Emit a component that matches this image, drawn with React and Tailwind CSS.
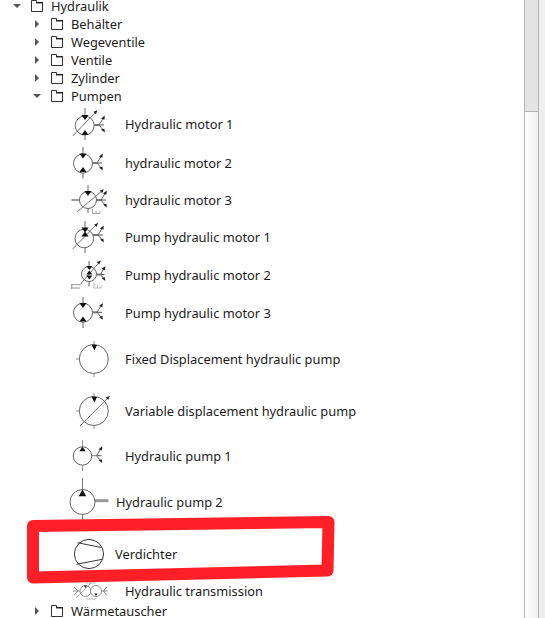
const INK = "#555";

function Tri({ x, y, dir, s = 3.6, h = 5 }) {
  const pts = dir === "down"
    ? `${x},${y + h} ${x - s},${y} ${x + s},${y}`
    : `${x},${y} ${x - s},${y + h} ${x + s},${y + h}`;
  return <polygon points={pts} fill="#111" />;
}

function Line({ a, w = 0.9, c = INK }) {
  return <line x1={a[0]} y1={a[1]} x2={a[2]} y2={a[3]} stroke={c} strokeWidth={w} />;
}

function Fan({ x, y, len = 5, spread = 6, thick = true, left = false }) {
  const d = left ? -1 : 1;
  const ex = x + d * (len + spread - 1);
  return (
    <g>
      <Line a={[x, y, x + d * len, y]} w={thick ? 2 : 0.9} c="#777" />
      <Line a={[x + d * len, y, ex, y]} w={1} />
      <Line a={[x + d * len, y, ex, y - spread - 2]} w={0.9} />
      <Line a={[x + d * len, y, ex, y + spread]} w={0.9} />
      <polygon points={`${ex + d * 0.8},${y - spread - 3.4} ${ex - d * 3},${y - spread - 0.4} ${ex + d * 0.4},${y - spread + 0.8}`} fill="#222" />
      <polygon points={`${ex + d * 0.8},${y + spread + 1.4} ${ex - d * 3},${y + spread - 1.4} ${ex + d * 0.4},${y + spread - 2.2}`} fill="#222" />
    </g>
  );
}

function Circle({ cx, cy, r, c = "#666", w = 1 }) {
  return <circle cx={cx} cy={cy} r={r} fill="#fff" stroke={c} strokeWidth={w} />;
}

function Diag({ a }) {
  const [x1, y1, x2, y2] = a;
  return (
    <g>
      <Line a={a} w={0.9} c="#666" />
      <polygon points={`${x2 + 0.8},${y2 - 0.8} ${x2 - 3.2},${y2 + 0.8} ${x2 - 0.8},${y2 + 3.2}`} fill="#222" />
    </g>
  );
}

const icons = {
  motor1: (
    <g>
      <Line a={[85, 108, 85, 116]} />
      <Line a={[85, 135, 85, 140]} />
      <Fan x={94} y={125} />
      <Circle cx={84.7} cy={125.5} r={9.5} />
      <Diag a={[72.7, 136, 96.7, 111]} />
      <Tri x={85} y={115} dir="down" />
      <Tri x={85} y={130} dir="up" />
    </g>
  ),
  motor2: (
    <g>
      <Line a={[83, 147, 83, 154]} />
      <Line a={[83, 173, 83, 178.5]} />
      <Fan x={92} y={163} />
      <Circle cx={83} cy={163.5} r={9.5} />
      <Tri x={83} y={153.5} dir="down" />
      <Tri x={83} y={167} dir="up" />
    </g>
  ),
  motor3: (
    <g>
      <Line a={[71.5, 200, 80, 200]} w={2} c="#999" />
      <Line a={[88, 185, 88, 192]} />
      <Line a={[88, 208, 88, 213]} />
      <Fan x={96} y={200} />
      <Circle cx={88} cy={200} r={8.5} />
      <Diag a={[77.3, 211.7, 103, 190]} />
      <Tri x={88} y={191} dir="down" />
      <path d="M92.5 209v4.5h7.5v-3M96 211v2.5" fill="none" stroke="#999" strokeWidth="0.8" />
    </g>
  ),
  motor4: (
    <g>
      <Line a={[85, 221, 85, 230]} />
      <Line a={[85, 248, 85, 253]} />
      <Fan x={93} y={235} />
      <Circle cx={84.3} cy={238.5} r={9.3} />
      <Diag a={[72.7, 249, 97.3, 223.7]} />
      <Tri x={85} y={227.5} dir="down" />
      <Tri x={85} y={231.5} dir="up" />
    </g>
  ),
  motor5: (
    <g>
      <Line a={[89, 261, 89, 267]} />
      <Line a={[89, 281, 89, 286.5]} />
      <Fan x={96.5} y={274.5} len={4} spread={5} />
      <Circle cx={89} cy={274} r={7.5} />
      <Diag a={[80, 284.7, 100, 261.3]} />
      <Tri x={89.3} y={266} dir="down" s={3} h={4} />
      <Tri x={89.3} y={270.5} dir="up" s={3} h={4} />
      <Tri x={89.3} y={275.5} dir="down" s={3} h={4} />
      <path d="M71.7 284v5M71.7 284.7h8.5M71.7 288h8.5" fill="none" stroke="#777" strokeWidth="0.8" />
      <path d="M94 283v5h7v-3M97.5 285v3" fill="none" stroke="#aaa" strokeWidth="0.8" />
    </g>
  ),
  motor6: (
    <g>
      <Line a={[83, 297, 83, 303]} />
      <Line a={[83, 322, 83, 328]} />
      <Fan x={92} y={312.3} />
      <Circle cx={83} cy={312.7} r={9.5} />
      <Tri x={83} y={303} dir="down" />
      <Tri x={83} y={316.5} dir="up" />
    </g>
  ),
  fixed: (
    <g>
      <Line a={[94, 341, 94, 344.5]} c="#888" />
      <Line a={[76, 359, 79.3, 359]} c="#888" />
      <Line a={[94, 373.5, 94, 377]} c="#888" />
      <Circle cx={93.8} cy={359} r={14.5} />
      <polygon points="91.5,344.5 97,345 94.5,350.5" fill="#111" />
    </g>
  ),
  variable: (
    <g>
      <Line a={[94, 393, 94, 397]} c="#888" />
      <Line a={[76, 411, 79.3, 411]} c="#888" />
      <Line a={[94, 425.5, 94, 429]} c="#888" />
      <Circle cx={93.8} cy={411} r={14.5} />
      <polygon points="91.5,396.5 97,397 94.5,402.5" fill="#111" />
      <Diag a={[80, 426, 109, 396.7]} />
    </g>
  ),
  pump1: (
    <g>
      <Line a={[82.5, 440, 82.5, 447]} c="#888" />
      <Line a={[82.5, 465, 82.5, 471]} c="#888" />
      <Fan x={91.5} y={455.7} thick={false} />
      <Circle cx={82.5} cy={456} r={9.2} />
      <Tri x={82.5} y={446.7} dir="up" s={3.2} h={4.6} />
    </g>
  ),
  pump2: (
    <g>
      <Line a={[82.5, 478, 82.5, 490]} c="#777" w={1} />
      <Line a={[82.5, 514, 82.5, 528]} c="#777" w={1} />
      <Line a={[95, 500.7, 108.5, 500.7]} c="#999" w={3} />
      <Circle cx={82.5} cy={502} r={12.5} />
      <Tri x={82.5} y={489.5} dir="up" s={3.8} h={6.8} />
    </g>
  ),
  verdichter: (
    <g>
      <Circle cx={89} cy={554} r={14.6} c="#222" w={0.9} />
      <Line a={[77.5, 542.7, 101.5, 547.5]} c="#222" w={0.9} />
      <Line a={[76.3, 564.3, 102.3, 559.3]} c="#222" w={0.9} />
    </g>
  ),
  trans: (
    <g>
      <Line a={[78, 591, 80, 591]} c="#888" />
      <Line a={[85.5, 583, 96, 583]} c="#aaa" w={0.8} />
      <Line a={[85.5, 599, 96, 599]} c="#aaa" w={0.8} />
      <path d="M78 591l-5 0M78 591l-4-4M78 591l-4 4" stroke="#777" strokeWidth="0.8" fill="none" />
      <Circle cx={85.5} cy={591} r={5.5} c="#888" w={0.9} />
      <Circle cx={96} cy={591} r={5.5} c="#888" w={0.9} />
      <path d="M103.5 591l4 0M103.5 591l3-4M103.5 591l3 4M101.5 591h2" stroke="#666" strokeWidth="0.8" fill="none" />
      <Line a={[76, 598, 91, 583]} c="#999" w={0.8} />
      <polygon points="83.7,585.6 87,585.6 85.4,588" fill="#222" />
      <polygon points="94.4,593.5 97.6,593.5 96,596" fill="#222" />
    </g>
  ),
};

function Folder() {
  return (
    <svg width="12" height="12" viewBox="0 0 12 12" className="shrink-0">
      <path d="M0.5 11.5V0.5H5.5V2.5H11.5V11.5Z" fill="#fff" stroke="#333" strokeWidth="1" />
      <path d="M5 2.7H12" stroke="#222" strokeWidth="1.5" />
    </svg>
  );
}

function Caret({ open }) {
  return (
    <svg width="8" height="8" viewBox="0 0 8 8" className="shrink-0">
      {open ? <polygon points="0,2 8,2 4,6" fill="#555" /> : <polygon points="2,0 6,4 2,8" fill="#555" />}
    </svg>
  );
}

function Branch({ level, open, label }) {
  return (
    <div className={`flex h-[18px] items-center ${level === 0 ? "pl-[13px]" : "pl-[33px]"}`}>
      <Caret open={open} />
      <div className="ml-[10px]">
        <Folder />
      </div>
      <span className="ml-2 whitespace-nowrap">{label}</span>
    </div>
  );
}

function Leaf({ icon, top, h, label, svgW = 55 }) {
  return (
    <div className="flex items-center pl-[70px]" style={{ height: h }}>
      <svg width={svgW} height={h} viewBox={`70 ${top} ${svgW} ${h}`} className="shrink-0 overflow-visible">
        {icons[icon]}
      </svg>
      <span className="whitespace-nowrap">{label}</span>
    </div>
  );
}

const leaves = [
  ["motor1", 105, 38, "Hydraulic motor 1"],
  ["motor2", 143, 39, "hydraulic motor 2"],
  ["motor3", 182, 36, "hydraulic motor 3"],
  ["motor4", 218, 38, "Pump hydraulic motor 1"],
  ["motor5", 256, 38, "Pump hydraulic motor 2"],
  ["motor6", 294, 38, "Pump hydraulic motor 3"],
  ["fixed", 332, 54, "Fixed Displacement hydraulic pump"],
  ["variable", 386, 50, "Variable displacement hydraulic pump"],
  ["pump1", 436, 40, "Hydraulic pump 1"],
  ["pump2", 476, 52, "Hydraulic pump 2", 46],
  ["verdichter", 528, 52, "Verdichter", 45],
  ["trans", 580, 22, "Hydraulic transmission"],
];

export default function App() {
  return (
    <div className="relative flex h-[618px] w-[545px] overflow-hidden bg-white text-[12.85px] leading-[18px] text-[#1c1c1c] [font-family:'Noto_Sans',sans-serif]">
      <div className="min-w-0 flex-1 -mt-[3px]">
        <Branch level={0} open label="Hydraulik" />
        <Branch level={1} label="Behälter" />
        <Branch level={1} label="Wegeventile" />
        <Branch level={1} label="Ventile" />
        <Branch level={1} label="Zylinder" />
        <Branch level={1} open label="Pumpen" />
        {leaves.map(([icon, top, h, label, svgW]) => (
          <Leaf key={icon} icon={icon} top={top} h={h} label={label} svgW={svgW} />
        ))}
        <Branch level={1} label="Wärmetauscher" />
      </div>
      <div className="flex w-[15px] shrink-0 flex-col border-x border-[#b5b5b5] bg-gradient-to-r from-white to-[#f0f0f0]">
        <div className="h-[112px] border-b border-[#b5b5b5] bg-[#e3e3e3]" />
      </div>
      <div className="w-[6px] shrink-0 bg-[#eeeeee]" />
      <svg className="pointer-events-none absolute left-0 top-0" width="545" height="618" viewBox="0 0 545 618">
        <polygon points="33,526 328.5,522 327.5,570.5 33,577.5" fill="none" stroke="#ff2027" strokeWidth="12" strokeLinejoin="round" />
      </svg>
    </div>
  );
}
